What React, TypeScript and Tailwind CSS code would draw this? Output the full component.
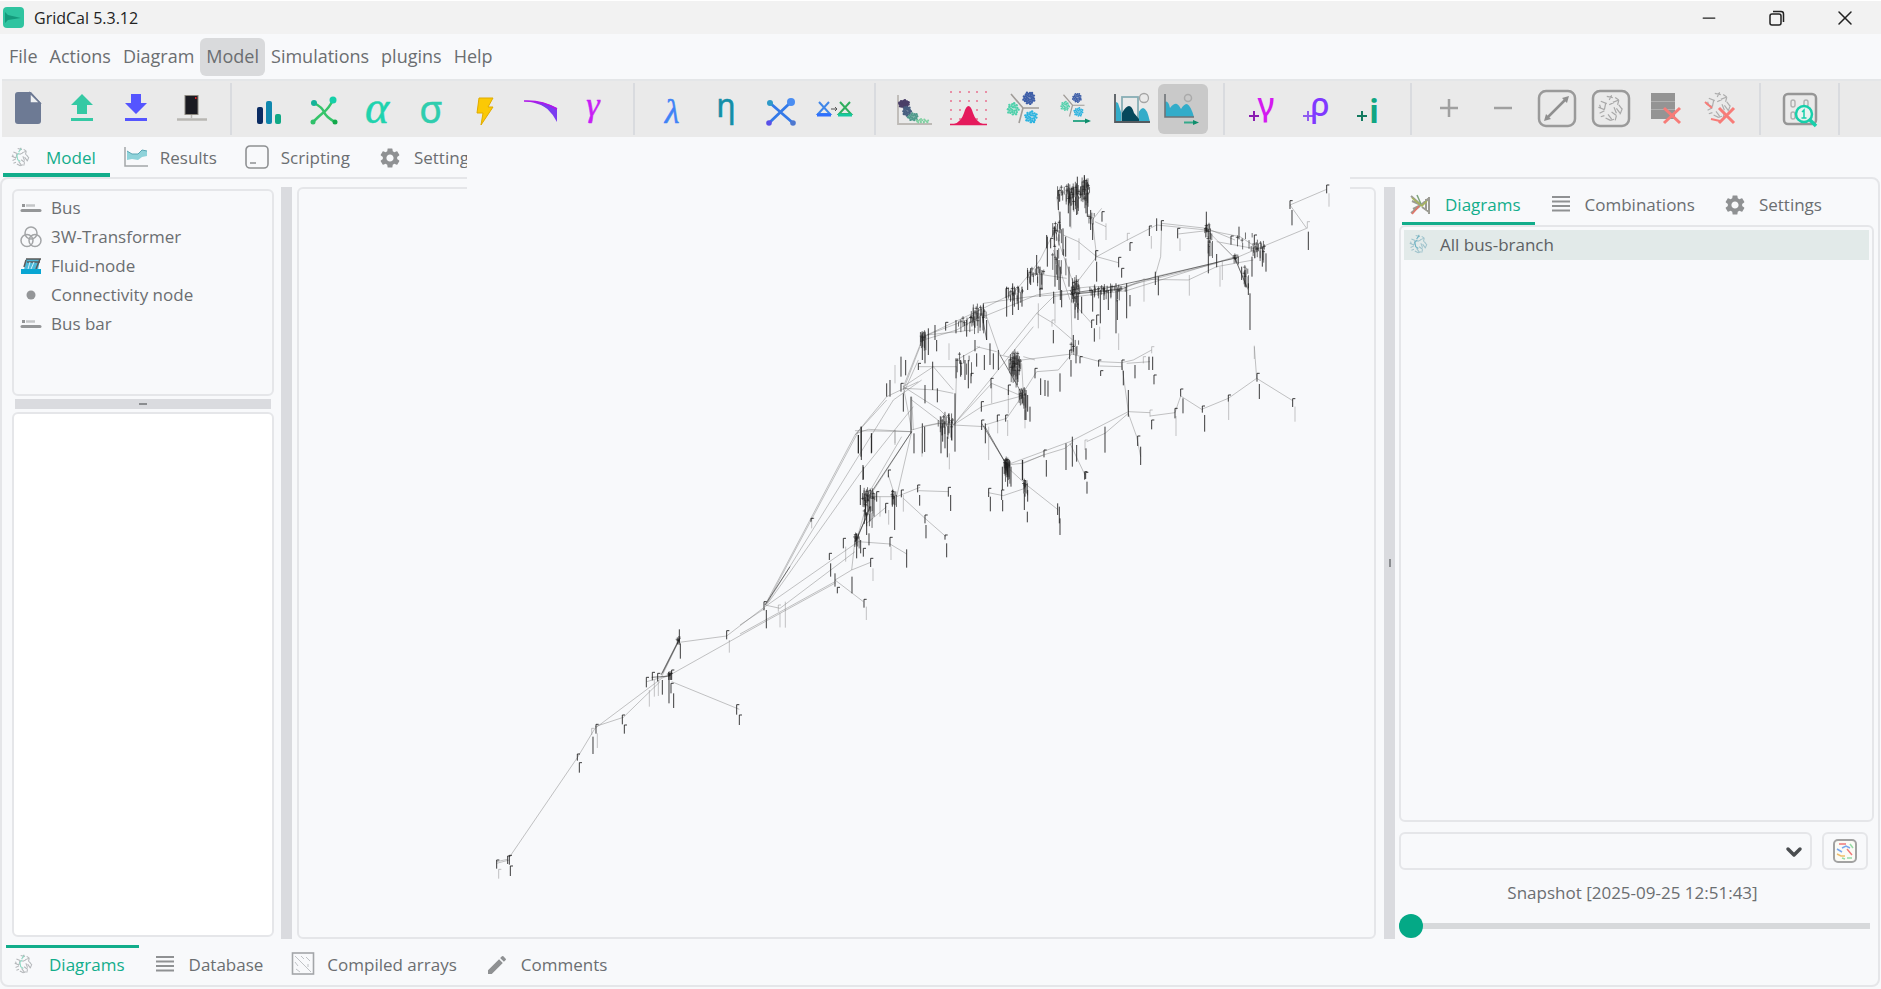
import { ReactNode } from "react";
import { ChevronDown, Minus, X } from "lucide-react";
import { MdEdit, MdSettings } from "react-icons/md";

type Point = [number, number];

// spread dots around a centre, always the same way
function scatter(cx: number, cy: number, rx: number, ry: number, count: number): Point[] {
  const points: Point[] = [];
  for (let i = 1; i <= count; i++) {
    const angle = i * 2.399;
    const r = Math.sqrt(i / count);
    points.push([cx + Math.cos(angle) * r * rx, cy + Math.sin(angle) * r * ry]);
  }
  return points;
}

function Dots({ points, size, color }: { points: Point[]; size: number; color: string }) {
  return (
    <g fill={color}>
      {points.map(([x, y], i) => (
        <circle key={i} cx={x} cy={y} r={size} />
      ))}
    </g>
  );
}

function Icon({ children, className = "size-10", box = "0 0 40 40" }: { children: ReactNode; className?: string; box?: string }) {
  return (
    <svg viewBox={box} className={`overflow-visible ${className}`} fill="none" aria-hidden="true">
      {children}
    </svg>
  );
}

const NET_PATH =
  "M9 2l5 1M13 1l-2 4M16 3l3 2M4 6l5 2M8 8l-1 5M2 11l5 2M3 9l1 3M3 16l4-2M7 18l-3 1M8 20l4 2M12 22l3-1M10 17l3 4M14 7l5-2M19 5l-1 4M19 9l3 4M22 12l-2 5M17 12l3 4M15 11l2 5M17 18l-1 4M13 15l4 3M11 9l4-2";

function NetIcon({ className = "size-6", first = "#b4b7ba", second = "#8fd9c4" }) {
  return (
    <Icon className={className} box="0 0 28 26">
      <path d={NET_PATH} stroke={first} strokeWidth="1.2" />
      <path d="M11 7l-3 3 1 5 3 2M10 6l3-4" stroke={second} strokeWidth="1.3" />
    </Icon>
  );
}

function ResultsIcon() {
  return (
    <Icon className="size-6" box="0 0 24 24">
      <path d="M1 1v19h23" stroke="#a3a6a9" strokeWidth="1.5" />
      <path d="M3 5l5 3 6 0 4-4 5 1v5l-5 1-4 3-6-1-5 1z" fill="#8fd3da" />
      <path d="M3 5l5 3 6 0 4-4 5 1" stroke="#5aa7b4" />
    </Icon>
  );
}

function ConsoleIcon() {
  return (
    <Icon className="size-6" box="0 0 24 24">
      <rect x="1" y="0" width="22" height="22" rx="4" stroke="#8f9193" strokeWidth="1.6" />
      <path d="M5 17h6" stroke="#8f9193" strokeWidth="1.5" />
    </Icon>
  );
}

function GearIcon() {
  return <MdSettings className="size-6 text-[#8f9193]" />;
}

function RowsIcon() {
  return (
    <Icon className="size-6" box="0 0 24 24">
      <path d="M3 4h18M3 8.500h18M3 13h18M3 17.500h18" stroke="#8f9193" strokeWidth="2" />
    </Icon>
  );
}

function ArrayIcon() {
  return (
    <Icon className="size-6" box="0 0 24 24">
      <rect x="1.5" y="0" width="21" height="21" stroke="#a3a6a9" strokeWidth="1.6" />
      <path d="M4 3l16 16M10 3l3 3M15 4l4 4M4 9l3 4M5 16l4 3M17 11v3" stroke="#bfc2c5" />
    </Icon>
  );
}

function DiagramsIcon() {
  return (
    <Icon className="size-6" box="0 0 24 24">
      <path d="M2 3l9 8M3 8l9 4M2 20l9-7M4 16l8-4M20 4v17M17 6v12M12 12l8-7M13 14l7 5" stroke="#9c9c94" strokeWidth="2" />
      <path d="M3 5l10 8 5-5" stroke="#a8b65a" strokeWidth="1.6" />
      <path d="M3 21l7-8" stroke="#e0766a" strokeWidth="1.8" />
      <path d="M8 2l4 9" stroke="#7ca37a" strokeWidth="1.5" />
    </Icon>
  );
}

function MathIcon({ glyph, color, size, base = 34, serif }: { glyph: string; color: string; size: number; base?: number; serif?: boolean }) {
  return (
    <Icon>
      <text
        x="20"
        y={base}
        textAnchor="middle"
        fontSize={size}
        fill={color}
        stroke={color}
        strokeWidth=".5"
        fontStyle={serif ? "italic" : "normal"}
        fontFamily={serif ? "Liberation Serif, serif" : "Noto Sans, sans-serif"}
      >
        {glyph}
      </text>
    </Icon>
  );
}

function PlusIcon({ glyph, color, plus, bold, base = 27 }: { glyph: string; color: string; plus: string; bold?: boolean; base?: number }) {
  return (
    <Icon>
      <path d="M7 27h10M12 22v10" stroke={plus} strokeWidth="2" />
      <text x="24" y={base} textAnchor="middle" fontSize="32" fontWeight={bold ? 700 : 500} fill={color} fontFamily="Noto Sans, sans-serif">
        {glyph}
      </text>
    </Icon>
  );
}

function Clusters() {
  return (
    <>
      <path d="M10 5l12 14h16M22 19l-4 15" stroke="#a09c98" strokeWidth="1.6" />
      <Dots points={scatter(28, 9, 6, 6, 32)} size={1.2} color="#3f5fa8" />
      <Dots points={scatter(12, 20, 6, 6, 24)} size={1.2} color="#4fd0ab" />
      <Dots points={scatter(30, 28, 6, 6, 26)} size={1.2} color="#2bb3e0" />
    </>
  );
}

const TOOL_GROUPS: { label: string; icon: ReactNode; active?: boolean }[][] = [
  [
    {
      label: "New",
      icon: (
        <Icon>
          <path d="M10 3h13l10 11v18a3 3 0 0 1-3 3H10a3 3 0 0 1-3-3V6a3 3 0 0 1 3-3z" fill="#6d7a94" />
          <path d="M22 4l10 10h-10z" fill="#eef0f2" stroke="#6d7a94" strokeWidth="1.5" />
        </Icon>
      ),
    },
    {
      label: "Open",
      icon: (
        <Icon>
          <path d="M20 5l11 11h-6v9H15v-9H9z" fill="#35c9a4" />
          <path d="M9 30.500h22" stroke="#35c9a4" strokeWidth="3" />
        </Icon>
      ),
    },
    {
      label: "Save",
      icon: (
        <Icon>
          <path d="M15 5h10v9h6L20 25 9 14h6z" fill="#5555ff" />
          <path d="M9 30.500h22" stroke="#5555ff" strokeWidth="3" />
        </Icon>
      ),
    },
    {
      label: "Console",
      icon: (
        <Icon>
          <rect x="15" y="6.5" width="13" height="19" fill="#1b1b22" stroke="#8c8880" />
          <path d="M25 9h1.500" stroke="#d22" strokeWidth="2" />
          <path d="M21.500 26v3" stroke="#b9b7b3" strokeWidth="1.5" />
          <path d="M7 30.500h30" stroke="#b9b7b3" strokeWidth="2.5" />
        </Icon>
      ),
    },
  ],
  [
    {
      label: "Power flow",
      icon: (
        <Icon>
          <rect x="8" y="18" width="6" height="17" rx="2" fill="#0b2c63" />
          <rect x="17" y="12" width="6" height="23" rx="2" fill="#0f87ae" />
          <rect x="26" y="25" width="6" height="10" rx="2" fill="#10a985" />
        </Icon>
      ),
    },
    {
      label: "Optimal power flow",
      icon: (
        <Icon>
          <path d="M11 14Q19 18 21 23T32 33M30 11Q26 19 21 23T10 33" stroke="#35c46a" strokeWidth="2.5" />
          <circle cx="11" cy="14" r="3" fill="#15b39a" />
          <circle cx="30" cy="11" r="3.5" fill="#15cfa9" />
          <circle cx="10" cy="33" r="2.5" fill="#2fc06a" />
          <circle cx="32" cy="33" r="2.5" fill="#12a84a" />
        </Icon>
      ),
    },
    { label: "Alpha", icon: <MathIcon glyph="α" color="#1fd3ae" size={46} serif /> },
    { label: "Sigma", icon: <MathIcon glyph="σ" color="#2fcdae" size={38} /> },
    {
      label: "Short circuit",
      icon: (
        <Icon>
          <path d="M14 9h14l-5 9h5L16 36l2-12h-6z" fill="#fbc905" stroke="#e0ab00" strokeLinejoin="round" />
        </Icon>
      ),
    },
    {
      label: "Continuation",
      icon: (
        <Icon>
          <path d="M5 12q18-1 33 7v6Q24 14 5 12z" fill="#9a28e8" />
          <path d="M14 12q16 5 24 21l0-12Q26 13 14 12z" fill="#7a3df0" />
          <path d="M5 12q18-1 33 8" stroke="#b018e8" strokeWidth="1.5" />
        </Icon>
      ),
    },
    { label: "Gamma", icon: <MathIcon glyph="γ" color="#c81df5" size={34} base={27} serif /> },
  ],
  [
    { label: "Lambda", icon: <MathIcon glyph="λ" color="#3f83f7" size={34} serif /> },
    { label: "Eta", icon: <MathIcon glyph="η" color="#158fa8" size={32} base={28} /> },
    {
      label: "Linear",
      icon: (
        <Icon>
          <path d="M10 14l23 20M31 13L9 34" stroke="#3379e8" strokeWidth="2.8" />
          <circle cx="10" cy="14" r="3" fill="#2f9ac8" />
          <circle cx="31" cy="13" r="4" fill="#4a8df2" />
          <circle cx="9" cy="34" r="2.8" fill="#5a50e8" />
          <circle cx="33" cy="34" r="2.8" fill="#4e78d0" />
        </Icon>
      ),
    },
    {
      label: "Convert",
      icon: (
        <Icon>
          <path d="M5 13l11 12H4l11-12" stroke="#3f86e8" strokeWidth="2" />
          <path d="M26 13l11 12H25l11-12" stroke="#2fae5e" strokeWidth="2" />
          <path d="M3 26h14" stroke="#2f6fff" strokeWidth="3" />
          <path d="M24 26h14" stroke="#16c9a0" strokeWidth="3" />
          <path d="M17 20h6m-2-2l2 2-2 2" stroke="#555" />
        </Icon>
      ),
    },
  ],
  [
    {
      label: "Scatter",
      icon: (
        <Icon>
          <path d="M5 6v29h34" stroke="#bdbab6" strokeWidth="1.8" />
          <Dots points={scatter(11, 15, 5, 4, 26)} size={1.3} color="#4a3f68" />
          <Dots points={scatter(14, 22, 4, 5, 22)} size={1.2} color="#475f80" />
          <Dots points={scatter(20, 28, 5, 4, 18)} size={1.2} color="#4f9a8c" />
          <Dots points={scatter(29, 32, 7, 2, 16)} size={1} color="#7ed0a0" />
        </Icon>
      ),
    },
    {
      label: "Distribution",
      icon: (
        <Icon>
          <g fill="#e8708f">
            {[4, 13, 22, 30, 39].map((x) => [3, 12, 21, 30].map((y) => <circle key={`${x}-${y}`} cx={x} cy={y} r="1" />))}
          </g>
          <path d="M7 35q7-2 10-11 2-7 4.500-7t4.500 7q3 9 10 11z" fill="#e51a5c" />
          <path d="M3 35.500h37" stroke="#e51a5c" strokeWidth="1.5" />
        </Icon>
      ),
    },
    { label: "Clustering", icon: <Icon><Clusters /></Icon> },
    {
      label: "Cluster series",
      icon: (
        <Icon>
          <g transform="translate(1 2) scale(.75)">
            <Clusters />
          </g>
          <path d="M18 32h16" stroke="#35a98b" strokeWidth="2" />
          <path d="M30 29.500l6 2.500-6 2.500z" fill="#0f8d6c" />
        </Icon>
      ),
    },
    {
      label: "Profile",
      icon: (
        <Icon>
          <path d="M7 33V13l2 1 5 15 4 4zM26 33q4-14 8-14t7 14z" fill="#33acc9" />
          <rect x="13" y="8" width="16" height="24" stroke="#88aeb5" strokeWidth="1.8" />
          <path d="M13 33V24q4-7 7-7t5 7l5 6v3z" fill="#06485b" />
          <path d="M6 5v28h35" stroke="#555b60" strokeWidth="1.8" />
          <circle cx="35" cy="9" r="4.5" stroke="#a4a4a4" strokeWidth="1.3" />
        </Icon>
      ),
    },
    {
      label: "Time series",
      active: true,
      icon: (
        <Icon>
          <path d="M2 28V13q3-2 5 6 4-5 7-4 2 1 4 5 3-5 6-5 4 2 7 13z" fill="#33acc9" />
          <path d="M2 5v23h29" stroke="#6f7377" strokeWidth="1.6" />
          <circle cx="25" cy="9" r="3.5" stroke="#aaa" strokeWidth="1.5" />
          <path d="M21 33.500h12" stroke="#35a98b" strokeWidth="2" />
          <path d="M30 31l6 2.500-6 2.500z" fill="#0f8d6c" />
        </Icon>
      ),
    },
  ],
  [
    { label: "Add gamma", icon: <PlusIcon glyph="γ" color="#d41af0" plus="#8a1fb0" /> },
    { label: "Add rho", icon: <PlusIcon glyph="ρ" color="#8038ff" plus="#8f5cf0" /> },
    { label: "Add i", icon: <PlusIcon glyph="i" color="#11a683" plus="#137a5f" bold base={34} /> },
  ],
  [
    { label: "Bigger", icon: <Icon><path d="M11 19h18M20 10v18" stroke="#a0a0a0" strokeWidth="2.5" /></Icon> },
    { label: "Smaller", icon: <Icon><path d="M11 19h18" stroke="#a0a0a0" strokeWidth="2.5" /></Icon> },
    {
      label: "Zoom fit",
      icon: (
        <Icon>
          <rect x="2" y="2" width="36" height="35" rx="7" stroke="#9a9a9a" strokeWidth="2.5" />
          <path d="M10 29L29 10" stroke="#8f8f8f" strokeWidth="2.5" />
          <path d="M32 7l-2 7-5-5zM7 32l2-7 5 5z" fill="#8f8f8f" />
        </Icon>
      ),
    },
    {
      label: "New diagram",
      icon: (
        <Icon>
          <rect x="2" y="2" width="36" height="35" rx="7" stroke="#9a9a9a" strokeWidth="2.5" />
          <g transform="translate(5 5) scale(1.2)">
            <path d={NET_PATH} stroke="#a8a8a8" />
          </g>
        </Icon>
      ),
    },
    {
      label: "Delete rows",
      icon: (
        <Icon>
          <rect x="6" y="4" width="24" height="26" fill="#949494" />
          <path d="M6 12.500h24M6 20.500h24" stroke="#b0b0b0" />
          <path d="M19 19l16 15M35 19L19 34" stroke="#f77c78" strokeWidth="3" />
        </Icon>
      ),
    },
    {
      label: "Delete diagram",
      icon: (
        <Icon>
          <g transform="translate(5 2) scale(1.2)">
            <path d={NET_PATH} stroke="#aeaeae" />
          </g>
          <path d="M6 13l7 6M12 30l9 2" stroke="#f77c78" strokeWidth="2" />
          <path d="M20 19l15 15M35 19L20 34" stroke="#f77c78" strokeWidth="3" />
        </Icon>
      ),
    },
  ],
  [
    {
      label: "Inspect",
      icon: (
        <Icon>
          <rect x="6" y="5" width="32" height="30" rx="4" stroke="#969696" strokeWidth="2.5" />
          <g stroke="#b0b0b0" strokeWidth="1.4">
            <rect x="13" y="11" width="4" height="7" rx="2" />
            <rect x="26" y="11" width="4" height="7" rx="2" />
            <rect x="13" y="23" width="4" height="7" rx="2" />
          </g>
          <circle cx="26" cy="25" r="8" fill="#eaf3f0" stroke="#17d0ab" strokeWidth="2.5" />
          <path d="M31 30l7 7" stroke="#17d0ab" strokeWidth="3.5" />
          <path d="M24 23l2-2v8M23.500 29h5" stroke="#17d0ab" strokeWidth="1.5" />
        </Icon>
      ),
    },
  ],
];

const MENUS = ["File", "Actions", "Diagram", "Model", "Simulations", "plugins", "Help"];

interface TabItem {
  label: string;
  icon: ReactNode;
}

const MAIN_TABS: TabItem[] = [
  { label: "Model", icon: <NetIcon /> },
  { label: "Results", icon: <ResultsIcon /> },
  { label: "Scripting", icon: <ConsoleIcon /> },
  { label: "Settings", icon: <GearIcon /> },
];

const SIDE_TABS: TabItem[] = [
  { label: "Diagrams", icon: <DiagramsIcon /> },
  { label: "Combinations", icon: <RowsIcon /> },
  { label: "Settings", icon: <GearIcon /> },
];

const BOTTOM_TABS: TabItem[] = [
  { label: "Diagrams", icon: <NetIcon /> },
  { label: "Database", icon: <RowsIcon /> },
  { label: "Compiled arrays", icon: <ArrayIcon /> },
  { label: "Comments", icon: <MdEdit className="size-6 text-[#8f9193]" /> },
];

function Tabs({ items, size }: { items: TabItem[]; size: string }) {
  return (
    <div role="tablist" className="flex">
      {items.map((tab, i) => (
        <button
          key={tab.label}
          role="tab"
          aria-selected={i === 0}
          className={`flex items-center gap-3 pr-3.5 ${size} ${
            i === 0 ? "border-[#12ad8b] pl-[7px] text-[#12ad8b]" : "border-transparent pl-3.5"
          }`}
        >
          {tab.icon}
          {tab.label}
        </button>
      ))}
    </div>
  );
}

function BarIcon() {
  return (
    <Icon className="size-6" box="0 0 24 24">
      <path d="M3 14.500h18" stroke="#949698" strokeWidth="3" strokeLinecap="round" />
      <path d="M3 9.500h3" stroke="#949698" strokeWidth="3" />
      <path d="M7 9.500h9" stroke="#c4c6c8" strokeWidth="2.5" />
    </Icon>
  );
}

const LIBRARY: TabItem[] = [
  { label: "Bus", icon: <BarIcon /> },
  {
    label: "3W-Transformer",
    icon: (
      <Icon className="size-6" box="0 0 24 24">
        <g stroke="#a3a5a7" strokeWidth="1.5">
          <circle cx="12" cy="8" r="6" />
          <circle cx="8" cy="15.5" r="6" />
          <circle cx="16" cy="15.5" r="6" />
        </g>
      </Icon>
    ),
  },
  {
    label: "Fluid-node",
    icon: (
      <Icon className="size-6" box="0 0 24 24">
        <path d="M7 5h14l-2 11H5z" fill="#4db8d8" />
        <path d="M7 5h15M8 8h13M21 5l-4 10M7 6L5 13" stroke="#5a5a5a" strokeWidth="1.5" />
        <path d="M11 8l-2 7M15 8l-3 7" stroke="#d4f0f8" />
        <path d="M2 15h20v5H2z" fill="#08a6d3" />
      </Icon>
    ),
  },
  {
    label: "Connectivity node",
    icon: (
      <Icon className="size-6" box="0 0 24 24">
        <circle cx="12" cy="12" r="4.5" fill="#949698" />
      </Icon>
    ),
  },
  { label: "Bus bar", icon: <BarIcon /> },
];

/* ---- network drawing ---- */

interface Area {
  x: number;
  y: number;
  lines: string;
  thick?: string;
  // x, top, length triples
  dark: number[];
  light: number[];
  // cx, cy, rx, ry, count, stick length
  packs: number[][];
}

const AREAS: Area[] = [
  {
    x: 840,
    y: 160,
    lines:
      "M650 110L660 180 640 220 600 300 570 340 520 400 420 450 250 530 190 680 215 810M240 560L190 690M770 290L862 240 950 195 1100 210 1200 230 1255 265 1400 205 1350 135 1460 88" +
      "M770 290L715 245 670 225M770 290L705 375M770 290L835 308M770 290L757 180 785 145M765 185L798 200M965 190L962 290 945 350M965 190L1100 205 1185 240M1015 222L1100 212" +
      "M705 400L850 385 945 350 1185 295 1255 265M705 410L860 392 1185 290M705 385L755 380 850 380 1130 310M850 385L912 358 1045 360 1130 320 1240 300M1100 210L1185 295M1130 245L1255 268M1140 250L1185 295 1225 390" +
      "M705 400L570 410 500 420 430 430M430 470L590 405 700 390M590 460L640 410 700 400M590 460L490 585M590 460L640 490 698 540M693 420L697 580M710 440L755 490M650 230L700 370M580 340L680 355M640 270L690 420" +
      "M440 470L480 585 545 600M545 600L695 582 780 605 845 608 880 600 935 570M780 618L845 620M550 590L585 600M860 610L930 605M845 610L865 755 930 758M930 768L1005 758 1022 708 1085 748 1165 715 1250 655 1358 722M1250 655L1243 560" +
      "M865 755L690 845 500 915M865 760L795 820 740 845M610 885L550 910M865 760L890 830 902 890M690 850L735 945M435 800L340 795 425 740 545 708M340 795L455 670 545 708M580 500L340 795" +
      "M215 810L250 800 300 790 340 795M215 815L85 808 50 820M190 680L300 750 340 790M190 680L280 620 350 620 345 790M235 620L280 620 340 690M190 685L290 690 340 700M655 630L590 635 545 705M655 630L695 582M250 540L350 510 420 470M250 530L300 510 380 480 430 440M260 525L400 510M545 710L500 775 435 795" +
      "M215 710L220 810M215 720L300 785M235 600L190 700M410 560L470 575M545 610L550 700M350 600L420 560",
    thick: "M705 402L850 387M690 390L705 415M705 398L800 384 945 352 1185 294M435 800L500 915M1185 295L1222 385M480 585L545 700M425 460L440 540",
    dark: [
      1460, 75, 25, 1350, 122, 25, 1356, 150, 46, 1405, 215, 55, 1099, 155, 60, 1013, 205, 30, 950, 175, 38, 964, 182, 30, 928, 198, 30, 870, 248, 25, 770, 305, 60, 786, 155, 30, 758, 190, 50, 767, 272, 30, 836, 292, 30,
      845, 325, 28, 1173, 228, 26, 1197, 200, 38, 1243, 225, 30, 1105, 250, 90, 1130, 282, 40, 1215, 330, 50, 1205, 320, 40, 1225, 370, 35, 1230, 400, 110, 1278, 280, 55, 1236, 290, 60, 1267, 260, 60, 955, 350, 56, 946, 335, 40,
      828, 370, 150, 860, 370, 105, 870, 405, 34, 832, 420, 60, 805, 390, 60, 792, 380, 40, 781, 390, 100, 770, 465, 30, 755, 480, 24, 758, 390, 65, 714, 430, 50, 705, 430, 45, 725, 410, 50, 763, 505, 40, 640, 510, 40,
      700, 525, 50, 689, 570, 28, 693, 600, 50, 846, 600, 30, 850, 632, 44, 782, 632, 16, 776, 600, 20, 885, 615, 40, 938, 590, 40, 927, 590, 40, 942, 645, 28, 865, 690, 80, 660, 640, 55, 602, 655, 50, 615, 660, 48, 624, 662, 48, 585, 625, 30,
      935, 780, 28, 1005, 745, 30, 1022, 687, 22, 1029, 715, 45, 1087, 738, 20, 1094, 765, 50, 1165, 705, 20, 1251, 640, 25, 1258, 672, 45, 1358, 716, 25, 893, 828, 30, 902, 860, 55, 738, 865, 34, 795, 800, 78, 710, 855, 50, 678, 850, 80, 697, 830, 90,
      612, 870, 22, 619, 900, 50, 548, 900, 60, 737, 937, 20, 424, 725, 30, 436, 790, 60, 425, 780, 30, 497, 765, 20, 472, 765, 20, 453, 655, 30, 505, 675, 30, 555, 700, 80, 563, 705, 50, 548, 690, 40, 570, 740, 45, 558, 690, 90,
      265, 505, 80, 247, 520, 80, 255, 520, 90, 285, 495, 45, 290, 540, 34, 317, 487, 25, 348, 480, 40, 380, 480, 50, 405, 540, 34, 410, 580, 40, 430, 430, 60, 440, 480, 60, 375, 600, 60, 385, 600, 85, 393, 640, 30, 348, 595, 60, 362, 600, 50,
      278, 605, 85, 235, 610, 20, 183, 590, 60, 190, 700, 55, 197, 600, 46, 140, 670, 40, 150, 660, 50, 183, 670, 25, 255, 675, 55, 213, 710, 110, 222, 820, 60, 247, 790, 90, 254, 800, 76, 292, 685, 42, 303, 770, 110, 345, 700, 175,
      327, 760, 60, 335, 780, 60, 315, 800, 65, 322, 830, 62, 308, 790, 55, 95, 820, 58, 63, 800, 90, 55, 825, 55, 69, 915, 45, 500, 380, 90, 518, 370, 95, 535, 380, 70, 546, 380, 60, 523, 380, 60, 563, 330, 60, 572, 325, 50, 590, 285, 60,
      600, 320, 70, 606, 330, 60, 622, 230, 90, 620, 225, 40, 632, 235, 30, 643, 200, 60, 652, 270, 90, 657, 300, 90, 669, 205, 80, 677, 230, 60, 661, 320, 100, 645, 290, 90, 665, 390, 52, 641, 395, 36, 687, 320, 60, 690, 100, 100, 710, 70, 95,
      738, 60, 100, 655, 90, 60, 660, 155, 65, 752, 150, 60, 450, 550, 65, 460, 580, 48, 475, 570, 60, 433, 585, 45, 498, 385, 30, 720, 590, 20, 708, 560, 50, 600, 385, 26, 733, 45, 60, 712, 50, 60, 742, 65, 105, 685, 70, 90, 700, 80, 70,
    ],
    light: [
      1467, 100, 40, 1020, 235, 38, 934, 228, 38, 862, 220, 22, 798, 190, 50, 717, 235, 65, 912, 355, 70, 1048, 345, 62, 1147, 300, 60, 1140, 320, 60, 836, 520, 50, 779, 500, 38, 595, 430, 75, 636, 480, 20, 1166, 725, 55, 1365, 740, 45,
      1008, 768, 60, 446, 800, 100, 328, 880, 48, 503, 780, 48, 473, 780, 40, 455, 670, 60, 555, 750, 55, 735, 840, 30, 165, 810, 40, 165, 615, 55, 645, 400, 90, 1243, 557, 40, 505, 690, 70, 327, 550, 50, 910, 590, 20, 935, 560, 20, 930, 750, 20, 1402, 185, 20, 693, 130, 75,
    ],
    packs: [
      [672, 100, 24, 18, 14, 26], [702, 108, 22, 30, 26, 30], [735, 92, 14, 34, 22, 30], [706, 395, 14, 34, 24, 34], [800, 392, 60, 10, 24, 24], [525, 618, 18, 34, 38, 34], [548, 710, 12, 18, 12, 28], [318, 795, 24, 26, 18, 32], [415, 470, 24, 26, 22, 36],
      [250, 538, 10, 16, 12, 28], [1255, 270, 22, 20, 18, 26], [1188, 295, 8, 8, 8, 16], [1103, 212, 10, 14, 10, 22], [585, 345, 28, 20, 14, 24], [525, 402, 24, 18, 14, 22], [652, 215, 16, 24, 12, 28], [655, 300, 24, 36, 8, 34], [500, 918, 10, 14, 16, 30],
      [380, 492, 28, 14, 10, 26], [370, 612, 26, 26, 8, 28], [1215, 240, 28, 20, 6, 22], [705, 560, 14, 16, 6, 22], [755, 174, 10, 12, 6, 18], [1110, 250, 8, 30, 8, 34], [1218, 350, 8, 26, 8, 26],
    ],
  },
  {
    x: 740,
    y: 400,
    lines:
      "M75 615L345 105 440 0M78 615L355 95M80 612L460 0M85 608L360 220 520 20M345 105L440 -10 535 -55M460 0L545 -60M75 620L290 470 355 425M120 625L345 455M0 702L285 545M0 675L75 625M75 615L120 625M285 540L370 605M285 540L335 510 392 487M335 510L345 420M355 425L450 432 500 462" +
      "M350 420L385 295 515 95M515 95L345 92M380 290L485 110M470 290L540 262M535 272L625 275M490 295L555 355 618 410M470 290L515 95M445 225L462 280M385 290L465 290M380 370L440 320M800 195L845 190 910 165 975 145 1000 125M860 255L955 330M745 278L790 287 855 265M800 200L860 255M545 80L640 60",
    thick: "M385 290L515 95M350 420L390 320M75 615L150 500M345 425L385 340M725 70L800 195",
    dark: [
      79, 630, 55, 72, 605, 26, 213, 355, 10, 272, 490, 40, 268, 460, 20, 310, 415, 30, 285, 520, 40, 292, 562, 18, 336, 530, 50, 392, 475, 26, 372, 598, 25, 387, 400, 36, 370, 445, 25, 350, 400, 75, 362, 420, 40, 450, 412, 28, 500, 448, 55,
      555, 345, 25, 558, 375, 40, 620, 430, 42, 615, 405, 14, 632, 285, 48, 625, 262, 28, 539, 285, 32, 533, 255, 22, 484, 270, 22, 464, 290, 100, 437, 310, 30, 457, 270, 50, 410, 275, 30, 445, 210, 22, 402, 290, 60, 361, 255, 60, 376, 300, 50, 390, 320, 44, 380, 340, 65,
      370, 200, 38, 394, 100, 60, 355, 105, 55, 364, 80, 100, 746, 265, 26, 785, 270, 30, 788, 300, 34, 751, 290, 44, 855, 240, 50, 862, 335, 32, 853, 280, 50, 953, 310, 35, 960, 355, 50, 1034, 215, 24, 1041, 245, 36, 847, 180, 60, 803, 200, 60, 813, 200, 60, 787, 200, 70, 958, 320, 50, 863, 270, 35,
    ],
    light: [120, 640, 42, 136, 605, 78, 399, 505, 38, 379, 620, 40, 453, 440, 40, 317, 440, 45, 420, 290, 60, 465, 90, 45, 446, 330, 44, 490, 285, 50, 115, 615, 20, 215, 355, 30, 546, 100, 70],
    packs: [[385, 295, 20, 20, 22, 34], [462, 292, 8, 14, 8, 24], [350, 418, 8, 10, 8, 24], [856, 258, 7, 12, 8, 24], [383, 345, 14, 26, 8, 30], [802, 205, 8, 12, 8, 42]],
  },
  {
    x: 470,
    y: 580,
    lines:
      "M118 832L322 533 375 445 575 295 600 285 885 125 1098 8M80 850L118 840M375 440L460 412 570 305M575 290L628 180M628 187L770 168 885 80M605 305L808 388M530 305L600 285M80 845L112 838",
    thick: "M577 280L630 175M573 285L626 180M545 292L600 288",
    dark: [
      80, 840, 26, 113, 828, 24, 118, 826, 28, 121, 858, 30, 322, 522, 20, 328, 548, 30, 369, 470, 52, 378, 433, 28, 457, 405, 28, 463, 435, 26, 529, 292, 30, 547, 277, 24, 563, 280, 24, 577, 300, 44, 597, 275, 95, 605, 270, 30, 611, 340, 44, 631, 190, 46, 628, 148, 40,
      770, 152, 26, 603, 310, 30, 800, 374, 30, 808, 405, 30, 600, 280, 20,
    ],
    light: [86, 868, 28, 382, 460, 44, 538, 330, 50, 553, 300, 50, 565, 300, 48, 778, 180, 38, 365, 445, 20],
    packs: [[626, 180, 5, 8, 6, 14], [600, 285, 5, 6, 5, 16]],
  },
];

// short sticks carry a hook on top, long ones are plain
function sticks(values: number[]) {
  let d = "";
  for (let i = 0; i < values.length; i += 3) {
    const [x, y, length] = values.slice(i, i + 3);
    d += length < 31 ? `M${x + 8} ${y}h-8v${length}` : `M${x} ${y}v${length}`;
  }
  return d;
}

function packedSticks(pack: number[]) {
  const [cx, cy, rx, ry, count, length] = pack;
  return scatter(cx, cy, rx, ry, count)
    .map(([x, y], i) => {
      const top = y - length / 2;
      const hook = i % 3 === 0 ? `M${x - 5} ${top + 6}h9` : "";
      return `${hook}M${x} ${top}v${length * (0.6 + (i % 4) * 0.3)}`;
    })
    .join("");
}

function NetworkDiagram() {
  return (
    <svg viewBox="467 138 883 760" className="block w-full" fill="none" role="img" aria-label="All bus-branch">
      {AREAS.map((area) => (
        <g key={area.x} transform={`translate(${area.x} ${area.y}) scale(.33333)`}>
          <path d={area.lines} stroke="#6b6b6b" strokeOpacity=".6" strokeWidth="2" />
          <path d={area.thick} stroke="#333" strokeOpacity=".6" strokeWidth="3" />
          <path d={sticks(area.light)} stroke="#8a8a8a" strokeOpacity=".75" strokeWidth="2" />
          <path d={sticks(area.dark)} stroke="#1a1a1a" strokeOpacity=".85" strokeWidth="3" />
          {area.packs.map((pack, i) => (
            <path key={i} d={packedSticks(pack)} stroke="#1c1c1c" strokeOpacity=".75" strokeWidth="2.5" />
          ))}
        </g>
      ))}
    </svg>
  );
}

function TitleBar() {
  return (
    <header className="flex h-[34px] items-center border-t border-white bg-[#f2f2f2] pl-[3px] text-base text-[#222]">
      <Icon className="size-[21px]" box="0 0 21 21">
        <rect width="21" height="21" rx="4" fill="#2fc4a0" />
        <path d="M2 5l3 3 13 3-13 2-3 3z" fill="#159a7c" />
      </Icon>
      <h1 className="ml-2.5">GridCal 5.3.12</h1>
      <div className="ml-auto flex pr-0.5">
        <button aria-label="Minimize" className="flex w-[68px] items-center justify-center">
          <Minus className="size-5" strokeWidth={1.5} />
        </button>
        <button aria-label="Restore" className="flex w-[68px] items-center justify-center">
          <Icon className="size-4" box="0 0 16 16">
            <rect x="1" y="4" width="11" height="11" rx="2" stroke="#222" strokeWidth="1.5" />
            <path d="M4 1.500h8a2.500 2.500 0 0 1 2.500 2.500v8" stroke="#222" strokeWidth="1.5" />
          </Icon>
        </button>
        <button aria-label="Close" className="flex w-[68px] items-center justify-center">
          <X className="size-6" strokeWidth={1.5} />
        </button>
      </div>
    </header>
  );
}

function MenuBar() {
  return (
    <nav className="flex h-[45px] items-center px-[3px] text-[18px]">
      {MENUS.map((menu) => (
        <button key={menu} className={`h-[38px] rounded-md px-1.5 ${menu === "Model" ? "bg-[#d9dadc]" : ""}`}>
          {menu}
        </button>
      ))}
    </nav>
  );
}

function ToolBar() {
  return (
    <div role="toolbar" className="ml-0.5 flex h-[58px] items-center gap-1 border-t-2 border-[#e4e6e8] bg-[#eaeaea] pl-px">
      {TOOL_GROUPS.map((group, i) => (
        <div key={i} className="flex items-center gap-1">
          {group.map((tool) => (
            <button
              key={tool.label}
              aria-label={tool.label}
              className={`flex size-[50px] items-center justify-center rounded-md ${tool.active ? "bg-[#c9c9c9]" : ""}`}
            >
              {tool.icon}
            </button>
          ))}
          <div className="mr-2 ml-[11px] h-[52px] w-0.5 bg-[#d9dbdf]"></div>
        </div>
      ))}
    </div>
  );
}

function SidePanel() {
  return (
    <aside className="flex w-full min-w-0 flex-col">
      <div className="pl-[3px]">
        <Tabs items={SIDE_TABS} size="h-[38px] border-b-3" />
      </div>
      <ul className="flex-1 rounded-md border-2 border-[#e5e6e9] p-[3px]">
        <li className="flex h-[30px] items-center gap-2 bg-[#e2eae9] pl-1 text-[#5d6164]">
          <NetIcon first="#9fc3cc" second="#6fb3c4" />
          All bus-branch
        </li>
      </ul>
      <div className="mt-2.5 flex gap-2.5 pr-1.5">
        <div className="relative flex-1">
          <select aria-label="Colour scheme" className="h-[38px] w-full appearance-none rounded-md border-2 border-[#e5e6e9] px-3"></select>
          <ChevronDown className="pointer-events-none absolute top-2 right-1.5 size-6 text-[#4a4d50]" strokeWidth={3.5} />
        </div>
        <button aria-label="Apply colours" className="flex h-[38px] w-[46px] items-center justify-center rounded-md border-2 border-[#e5e6e9]">
          <Icon className="size-6" box="0 0 24 24">
            <rect x="1" y="1" width="22" height="22" rx="4" fill="#fbfbf6" stroke="#a2a2a2" strokeWidth="2" />
            <path d="M6 5h7M14 10l5 6" stroke="#f07a7a" strokeWidth="1.5" />
            <path d="M4 10l5 3M9 9l4-2 4 2" stroke="#7aa7ee" strokeWidth="1.5" />
            <path d="M4 15l4 2 4 0" stroke="#f0be6a" strokeWidth="1.5" />
            <path d="M14 19h5M17 5l3 4M9 19l3 1" stroke="#97dca6" strokeWidth="1.5" />
          </Icon>
        </button>
      </div>
      <label htmlFor="snapshot" className="mt-2.5 h-[26px] pr-2 text-center">
        Snapshot [2025-09-25 12:51:43]
      </label>
      <div className="mt-2 mb-px pr-1">
        <input
          id="snapshot"
          type="range"
          min="0"
          max="100"
          defaultValue="0"
          className="block h-6 w-full cursor-pointer appearance-none bg-transparent
          [&::-webkit-slider-runnable-track]:h-1.5
          [&::-webkit-slider-runnable-track]:bg-[#d7d9db]
          [&::-webkit-slider-thumb]:-mt-[9px]
          [&::-webkit-slider-thumb]:size-6
          [&::-webkit-slider-thumb]:appearance-none
          [&::-webkit-slider-thumb]:rounded-full
          [&::-webkit-slider-thumb]:bg-[#04a986]"
        />
      </div>
    </aside>
  );
}

export default function App() {
  return (
    <div className="flex min-h-screen flex-col bg-[#f8f9fb] font-['Open_Sans','Noto_Sans',sans-serif] text-[17px] text-[#6b6e71]">
      <TitleBar />
      <MenuBar />
      <ToolBar />

      <div className="flex h-10 pl-[3px]">
        <Tabs items={MAIN_TABS} size="h-10 border-b-4 pt-1.5" />
      </div>

      <main className="mr-px mb-0.5 flex flex-1 flex-col rounded-lg border-2 border-[#e5e6e9] pt-2">
        <div className="flex flex-1">
          {/* library */}
          <section className="ml-2.5 flex w-[262px] shrink-0 flex-col pb-0.5">
            <ul className="mt-0.5 h-[207px] rounded-md border-2 border-[#e5e6e9] px-[5px] pt-0.5">
              {LIBRARY.map((item) => (
                <li key={item.label} className="flex h-[29px] items-center gap-2">
                  {item.icon}
                  {item.label}
                </li>
              ))}
            </ul>
            <div className="mx-[3px] my-[3px] flex h-2.5 items-center justify-center bg-[#dadbdf]">
              <span className="h-0.5 w-2 bg-[#8b8d90]"></span>
            </div>
            <div className="flex-1 rounded-md border-2 border-[#e5e6e9] bg-white"></div>
          </section>

          <div className="ml-[7px] w-[11px] shrink-0 bg-[#dadbdf]"></div>

          {/* canvas */}
          <section className="relative ml-[5px] min-w-0 flex-1 rounded-md border-2 border-[#e5e6e9]">
            <div className="absolute -top-[51px] right-6 left-[168px] bg-[#f8f9fb]">
              <NetworkDiagram />
            </div>
          </section>

          <div className="ml-2 flex w-[11px] shrink-0 items-center justify-center bg-[#dadbdf]">
            <span className="h-2 w-0.5 bg-[#8b8d90]"></span>
          </div>

          <div className="ml-1 flex w-[479px] shrink-0 pr-1">
            <SidePanel />
          </div>
        </div>

        <div className="mt-1.5 pl-1">
          <Tabs items={BOTTOM_TABS} size="h-10 border-t-3 pb-1" />
        </div>
      </main>
    </div>
  );
}
